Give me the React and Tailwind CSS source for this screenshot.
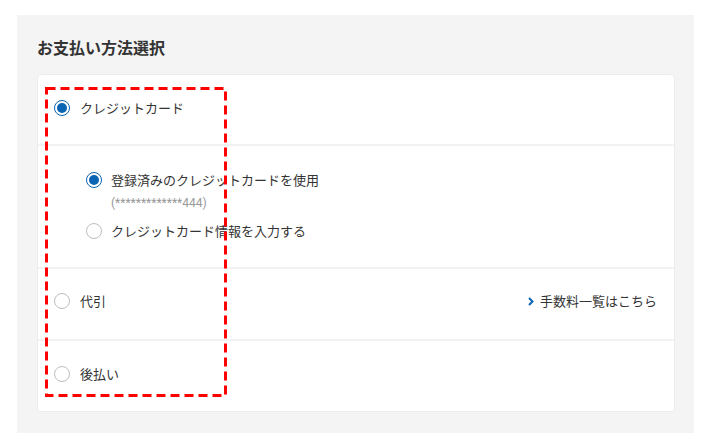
import React, { useState } from 'react';

const font = { fontFamily: '"Noto Sans CJK JP", "Noto Sans", sans-serif' };

const Radio = ({ checked }) => (
    <span
        className={`flex h-4 w-4 flex-shrink-0 items-center justify-center rounded-full border bg-white ${
            checked ? 'border-[#0a64b4]' : 'border-[#bdbdbd]'
        }`}
    >
        {checked && <span className="h-[10px] w-[10px] rounded-full bg-[#0a64b4]"></span>}
    </span>
);

const Chevron = () => (
    <svg width="6" height="9" viewBox="0 0 6 9" className="mr-[6px]">
        <polyline points="1,1 4.5,4.5 1,8" fill="none" stroke="#0a64b4" strokeWidth="2" />
    </svg>
);

const App = () => {
    const [method, setMethod] = useState('card');
    const [cardMode, setCardMode] = useState('saved');

    return (
        <div className="h-[448px] w-[710px] bg-white pl-[17px] pt-[15px]" style={font}>
            <div className="h-[418px] w-[677px] bg-[#f4f4f4] pl-5 pr-[19px] pt-5">
                <h2 className="text-[16px] font-bold leading-6 text-[#333]">お支払い方法選択</h2>

                <div className="relative mt-[15px] rounded-[4px] border border-[#ececec] bg-white text-[13px] leading-5 text-[#333]">
                    {/* クレジットカード */}
                    <div
                        className="flex cursor-pointer items-center gap-[10px] pb-[26px] pl-4 pt-[23px]"
                        onClick={() => setMethod('card')}
                    >
                        <Radio checked={method === 'card'} />
                        <span>クレジットカード</span>
                    </div>

                    <div className="border-t-2 border-[#f2f2f2] pb-[26px] pl-12 pt-6">
                        <div className="flex cursor-pointer items-center gap-[9px]" onClick={() => setCardMode('saved')}>
                            <Radio checked={cardMode === 'saved'} />
                            <span>登録済みのクレジットカードを使用</span>
                        </div>
                        <div className="mt-1 pl-[25px] text-[12px] leading-[18px] text-[#999]" style={{ fontFamily: 'Roboto, "Noto Sans CJK JP", sans-serif' }}>
                            (*************444)
                        </div>
                        <div className="mt-[9px] flex cursor-pointer items-center gap-[9px]" onClick={() => setCardMode('new')}>
                            <Radio checked={cardMode === 'new'} />
                            <span>クレジットカード情報を入力する</span>
                        </div>
                    </div>

                    {/* 代引 */}
                    <div className="flex items-center justify-between border-t-2 border-[#f2f2f2] pb-[28px] pl-4 pr-[17px] pt-[22px]">
                        <div className="flex cursor-pointer items-center gap-[10px]" onClick={() => setMethod('cod')}>
                            <Radio checked={method === 'cod'} />
                            <span>代引</span>
                        </div>
                        <a className="flex items-center text-[#333]" href="#">
                            <Chevron />
                            手数料一覧はこちら
                        </a>
                    </div>

                    {/* 後払い */}
                    <div
                        className="flex cursor-pointer items-center gap-[10px] border-t-2 border-[#f2f2f2] pb-[27px] pl-4 pt-[23px]"
                        onClick={() => setMethod('later')}
                    >
                        <Radio checked={method === 'later'} />
                        <span>後払い</span>
                    </div>

                    {/* 注目枠 */}
                    <svg
                        className="pointer-events-none absolute left-[7px] top-[12px]"
                        width="182"
                        height="310"
                        viewBox="0 0 182 310"
                    >
                        <rect x="1.5" y="1.5" width="179" height="307" fill="none" stroke="#ff0000" strokeWidth="3" strokeDasharray="9 5" />
                    </svg>
                </div>
            </div>
        </div>
    );
};

export default App;
